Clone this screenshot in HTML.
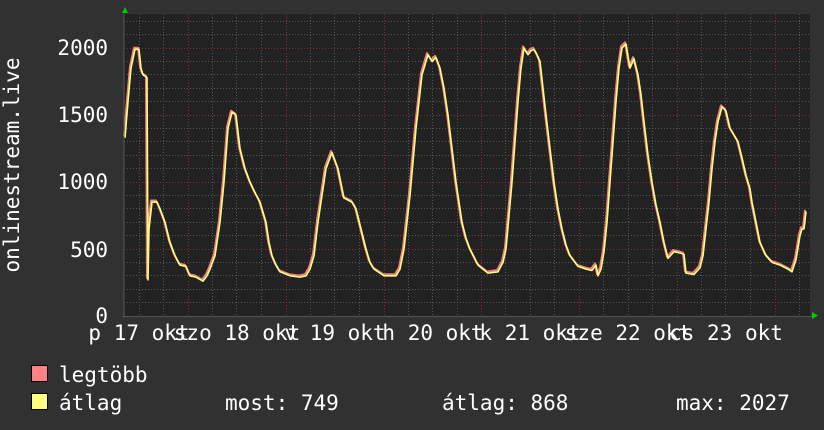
<!DOCTYPE html>
<html><head><style>
html,body{margin:0;padding:0;background:#313131;width:824px;height:430px;overflow:hidden}
svg{display:block}
text{font-family:"DejaVu Sans Mono","Liberation Mono",monospace;font-size:21px;fill:#fff}
</style></head><body>
<svg width="824" height="430" viewBox="0 0 824 430">
<rect x="124" y="14" width="686" height="302" fill="#222"/>
<path fill="none" stroke="#555" stroke-width="1" stroke-dasharray="1,2" d="M139.5 14V316M163.5 14V316M212.5 14V316M236.5 14V316M261.5 14V316M310.5 14V316M334.5 14V316M359.5 14V316M408.5 14V316M432.5 14V316M457.5 14V316M505.5 14V316M530.5 14V316M554.5 14V316M603.5 14V316M628.5 14V316M652.5 14V316M701.5 14V316M725.5 14V316M750.5 14V316M799.5 14V316
M124 302.5H810M124 289.5H810M124 275.5H810M124 262.5H810M124 235.5H810M124 222.5H810M124 208.5H810M124 195.5H810M124 168.5H810M124 155.5H810M124 141.5H810M124 128.5H810M124 101.5H810M124 88.5H810M124 74.5H810M124 61.5H810M124 34.5H810M124 21.5H810"/>
<path fill="none" stroke="#803030" stroke-width="1" stroke-dasharray="1,2" d="M188.5 14V316M286.5 14V316M384.5 14V316M481.5 14V316M579.5 14V316M677.5 14V316M775.5 14V316M124 249.5H810M124 182.5H810M124 115.5H810M124 48.5H810"/>
<g transform="translate(0,316) scale(1,-0.134)" fill="none" stroke-linejoin="round">
<polyline vector-effect="non-scaling-stroke" stroke="#f08080" stroke-width="2" transform="translate(-1,12)" points="125,1330 128,1600 131,1850 135,1990 139,1990 141,1850 143,1800 147,1780 148,270 149,650 152,850 157,850 160,800 165,700 170,550 175,450 180,380 186,370 190,300 196,290 203,260 207,300 210,350 215,450 220,700 224,1000 228,1400 232,1520 236,1500 240,1250 245,1100 250,1000 255,920 260,850 266,700 269,550 272,450 276,380 280,330 290,300 300,290 306,300 310,350 314,450 318,700 322,900 326,1100 332,1220 338,1100 344,880 352,850 356,800 360,680 366,500 370,400 374,350 380,320 384,300 396,300 400,350 404,500 407,700 410,900 413,1150 416,1400 419,1600 422,1800 428,1950 432,1900 436,1930 440,1850 444,1700 448,1500 452,1250 456,1000 462,700 466,580 470,500 478,380 488,320 498,330 503,400 506,500 509,750 512,1000 515,1300 518,1600 521,1850 524,2000 528,1950 531,1980 534,1990 537,1950 540,1900 543,1700 546,1500 550,1250 554,1000 558,800 562,650 566,530 570,450 578,370 586,350 592,340 596,380 598,300 601,350 604,480 607,700 610,1000 613,1300 616,1600 619,1850 622,2000 626,2030 630,1850 634,1920 638,1800 641,1650 644,1450 648,1200 652,1000 656,830 660,700 664,550 668,430 674,480 680,470 684,460 686,320 694,310 700,360 703,450 706,650 709,850 712,1100 715,1300 718,1450 722,1560 726,1530 730,1400 734,1350 738,1300 742,1180 746,1050 750,950 752,850 756,700 760,550 766,450 772,400 780,380 788,350 792,330 796,420 800,600 802,650 804,650 806,780"/>
<polyline vector-effect="non-scaling-stroke" stroke="#ffff80" stroke-width="1.6" points="125,1330 128,1600 131,1850 135,1990 139,1990 141,1850 143,1800 147,1780 148,270 149,650 152,850 157,850 160,800 165,700 170,550 175,450 180,380 186,370 190,300 196,290 203,260 207,300 210,350 215,450 220,700 224,1000 228,1400 232,1520 236,1500 240,1250 245,1100 250,1000 255,920 260,850 266,700 269,550 272,450 276,380 280,330 290,300 300,290 306,300 310,350 314,450 318,700 322,900 326,1100 332,1220 338,1100 344,880 352,850 356,800 360,680 366,500 370,400 374,350 380,320 384,300 396,300 400,350 404,500 407,700 410,900 413,1150 416,1400 419,1600 422,1800 428,1950 432,1900 436,1930 440,1850 444,1700 448,1500 452,1250 456,1000 462,700 466,580 470,500 478,380 488,320 498,330 503,400 506,500 509,750 512,1000 515,1300 518,1600 521,1850 524,2000 528,1950 531,1980 534,1990 537,1950 540,1900 543,1700 546,1500 550,1250 554,1000 558,800 562,650 566,530 570,450 578,370 586,350 592,340 596,380 598,300 601,350 604,480 607,700 610,1000 613,1300 616,1600 619,1850 622,2000 626,2030 630,1850 634,1920 638,1800 641,1650 644,1450 648,1200 652,1000 656,830 660,700 664,550 668,430 674,480 680,470 684,460 686,320 694,310 700,360 703,450 706,650 709,850 712,1100 715,1300 718,1450 722,1560 726,1530 730,1400 734,1350 738,1300 742,1180 746,1050 750,950 752,850 756,700 760,550 766,450 772,400 780,380 788,350 792,330 796,420 800,600 802,650 804,650 806,780"/>
</g>
<line x1="124" y1="14" x2="124" y2="318" stroke="#555"/>
<line x1="122" y1="316.5" x2="812" y2="316.5" stroke="#555"/>
<polygon points="122,13 128,13 125,7" fill="#0c0"/>
<polygon points="812,312 812,319 818,315.5" fill="#0c0"/>
<g text-anchor="end">
<text x="108" y="55">2000</text>
<text x="108" y="122">1500</text>
<text x="108" y="189">1000</text>
<text x="108" y="257">500</text>
<text x="108" y="323">0</text>
</g>
<text transform="translate(19,165) rotate(-90)" text-anchor="middle">onlinestream.live</text>
<g text-anchor="middle">
<text x="139" y="340">p 17 okt</text>
<text x="237" y="340">szo 18 okt</text>
<text x="335" y="340">v 19 okt</text>
<text x="433" y="340">h 20 okt</text>
<text x="530" y="340">k 21 okt</text>
<text x="628" y="340">sze 22 okt</text>
<text x="726" y="340">cs 23 okt</text>
</g>
<rect x="31.5" y="365.5" width="16" height="16" fill="#ff8080" stroke="#000"/>
<rect x="31.5" y="393.5" width="16" height="16" fill="#ffff80" stroke="#000"/>
<text x="59" y="382">legtöbb</text>
<text x="59" y="410">átlag</text>
<text x="225" y="410">most: 749</text>
<text x="442" y="410">átlag: 868</text>
<text x="676" y="410">max: 2027</text>
</svg>
</body></html>
